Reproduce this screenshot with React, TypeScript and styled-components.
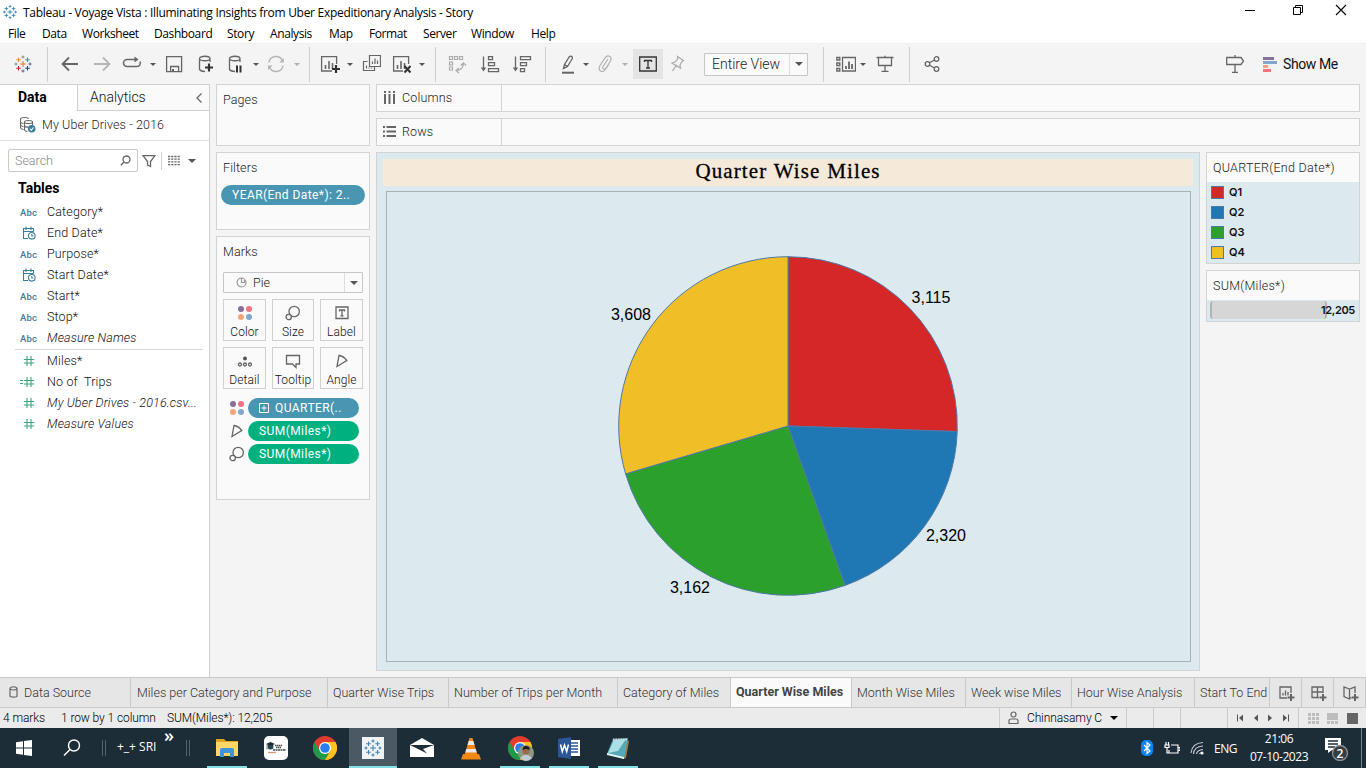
import React from "react";
import styled, { createGlobalStyle, css } from "styled-components";

const GlobalStyle = createGlobalStyle`
  *, *::before, *::after { box-sizing: border-box; }
  body { margin: 0; background: #f4f4f4; }
  svg { display: block; flex: none; }
`;

const tableauFont = `Roboto, "Liberation Sans", sans-serif`;
const systemFont = `"Open Sans", "Noto Sans", sans-serif`;

/* ---------- window chrome ---------- */

const Window = styled.div`
  width: 1366px;
  height: 768px;
  overflow: hidden;
  display: flex;
  flex-direction: column;
  background: #f4f4f4;
  font-family: ${tableauFont};
  font-weight: 300;
  font-size: 13px;
  color: #222;
  white-space: nowrap;
`;

const TitleBar = styled.header`
  height: 24px;
  display: flex;
  align-items: center;
  background: #fff;
  padding-left: 2px;
  font: 12px ${systemFont};
  color: #000;
`;

const TitleText = styled.span`
  margin-left: 5px;
  flex: 1;
  letter-spacing: -0.29px;
`;

const WindowButtons = styled.div`
  display: flex;
  width: 126px;
  justify-content: space-between;
  padding: 0 19px 4px 0;
`;

const MenuBar = styled.nav`
  height: 19px;
  display: flex;
  background: #fff;
  font: 12px/20px ${systemFont};
  color: #000;
`;

const MenuItem = styled.span<{ $w: number }>`
  width: ${(p) => p.$w}px;
  padding-left: 8px;
  letter-spacing: -0.4px;
`;

const Toolbar = styled.div`
  height: 41px;
  display: flex;
  align-items: center;
  border-top: 1px solid #efefef;
`;

const Tool = styled.span<{ $gap: number; $w?: number; $active?: boolean }>`
  width: ${(p) => p.$w ?? 20}px;
  height: ${(p) => (p.$active ? 30 : 20)}px;
  margin-left: ${(p) => p.$gap}px;
  display: flex;
  align-items: center;
  justify-content: center;
  flex: none;
  background: ${(p) => (p.$active ? "#e4e4e4" : "none")};
`;

const ToolDivider = styled.span<{ $gap: number }>`
  width: 1px;
  height: 35px;
  margin-left: ${(p) => p.$gap}px;
  background: #cfcfcf;
  flex: none;
`;

const CaretMark = styled.span<{ $size?: number; $color?: string }>`
  width: 0;
  height: 0;
  border: ${(p) => p.$size ?? 3}px solid transparent;
  border-top-color: ${(p) => p.$color ?? "#555"};
  border-bottom: 0;
  border-top-width: ${(p) => p.$size ?? 3}px;
`;

const SelectBox = styled.div<{ $w: number; $h: number; $gap?: number; $arrow: number }>`
  width: ${(p) => p.$w}px;
  height: ${(p) => p.$h}px;
  margin-left: ${(p) => p.$gap ?? 0}px;
  display: flex;
  flex: none;
  border: 1px solid #c6c6c6;
  border-radius: 1px;
  background: #fafafa;
  color: #222;
  > :last-child {
    width: ${(p) => p.$arrow}px;
    border-left: 1px solid #dedede;
    display: flex;
    align-items: center;
    justify-content: center;
  }
`;

const SelectText = styled.span<{ $pad: number; $size: number }>`
  flex: 1;
  display: flex;
  align-items: center;
  gap: 6px;
  padding: 0 0 1px ${(p) => p.$pad}px;
  font-size: ${(p) => p.$size}px;
`;

const ShowMe = styled.div`
  display: flex;
  align-items: center;
  gap: 6px;
  margin-left: 18px;
  color: #111;
  font-size: 14px;
  font-weight: 400;
  letter-spacing: -0.4px;
  padding-bottom: 1px;
`;

/* ---------- data pane ---------- */

const Workspace = styled.main`
  height: 593px;
  display: flex;
`;

const DataPane = styled.aside`
  width: 210px;
  background: #fff;
  border-top: 1px solid #d0d0d0;
  border-right: 1px solid #cfcfcf;
  flex: none;
`;

const PaneTabs = styled.div`
  height: 26px;
  display: flex;
  font-size: 14px;
  line-height: 25px;
`;

const PaneTab = styled.div<{ $active?: boolean }>`
  display: flex;
  ${(p) =>
    p.$active
      ? css`
          width: 78px;
          padding-left: 18px;
          font-weight: 700;
          color: #000;
          border-right: 1px solid #d0d0d0;
        `
      : css`
          flex: 1;
          padding: 0 6px 0 12px;
          justify-content: space-between;
          align-items: center;
          background: #fafafa;
          border-bottom: 1px solid #d0d0d0;
          color: #111;
        `}
`;

const SourceRow = styled.div`
  height: 30px;
  display: flex;
  align-items: center;
  gap: 6px;
  padding: 0 0 2px 19px;
  border-bottom: 1px solid #e0e0e0;
  font-size: 12.5px;
  letter-spacing: 0.1px;
  color: #222;
`;

const SearchRow = styled.div`
  display: flex;
  align-items: center;
  padding: 8px 0 0 8px;
`;

const SearchBox = styled.div`
  width: 130px;
  height: 23px;
  border: 1px solid #c8c8c8;
  border-radius: 2px;
  display: flex;
  align-items: center;
  justify-content: space-between;
  padding: 0 6px;
  color: #888;
  margin-right: 4px;
  font-size: 12.5px;
`;

const SmallDivider = styled.span`
  width: 1px;
  height: 18px;
  margin: 0 6px 0 5px;
  background: #d0d0d0;
`;

const TablesTitle = styled.h2`
  margin: 6px 0 2px 18px;
  font-size: 14px;
  line-height: 21px;
  color: #000;
`;

const FieldList = styled.div<{ $split?: boolean }>`
  margin: 0 6px 0 15px;
  ${(p) => p.$split && "border-top: 1px solid #d8d8d8; margin-top: 1px;"}
`;

const Field = styled.div<{ $italic?: boolean }>`
  height: 21px;
  display: flex;
  align-items: center;
  color: #111;
  font-size: 12.5px;
  letter-spacing: 0.15px;
  font-style: ${(p) => (p.$italic ? "italic" : "normal")};
  white-space: pre;
`;

const FieldIcon = styled.span`
  width: 27px;
  margin-right: 5px;
  display: flex;
  justify-content: center;
  padding-top: 1px;
`;

const AbcMark = styled.span`
  font: 500 9.5px Roboto, sans-serif;
  color: #3c7d99;
`;

/* ---------- cards ---------- */

const CardColumn = styled.section`
  width: 154px;
  margin-left: 6px;
  display: flex;
  flex-direction: column;
  gap: 6px;
  flex: none;
`;

const Card = styled.div<{ $h: number }>`
  height: ${(p) => p.$h}px;
  border: 1px solid #d3d3d3;
  background: #fafafa;
  flex: none;
`;

const CardTitle = styled.div`
  padding: 7px 0 0 6px;
  line-height: 16px;
  font-size: 12.5px;
  letter-spacing: 0.1px;
  color: #222;
`;

const Pill = styled.div<{ $green?: boolean; $w: number }>`
  width: ${(p) => p.$w}px;
  height: 20px;
  border-radius: 10px;
  display: flex;
  align-items: center;
  gap: 6px;
  padding-left: 11px;
  background: ${(p) => (p.$green ? "#00b180" : "#4996b2")};
  color: #fff;
  font-weight: 400;
  font-size: 12px;
  letter-spacing: 0.43px;
`;

const FilterPill = styled.div`
  padding: 9px 0 0 4px;
`;

const MarkType = styled.div`
  padding: 12px 0 0 6px;
`;

const MarkGrid = styled.div`
  display: grid;
  grid-template-columns: 43px 42px 43px;
  column-gap: 6px;
  row-gap: 6px;
  padding: 6px 0 0 6px;
`;

const MarkButton = styled.div`
  height: 42px;
  border: 1px solid #d0d0d0;
  display: flex;
  flex-direction: column;
  align-items: center;
  gap: 4px;
  padding-top: 5px;
  font-size: 12px;
  line-height: 15px;
  letter-spacing: 0.1px;
  color: #111;
`;

const Encodings = styled.div`
  display: flex;
  flex-direction: column;
  gap: 3px;
  padding: 9px 0 0 11px;
`;

const Encoding = styled.div`
  display: flex;
  align-items: center;
  gap: 2px;
`;

/* ---------- view area ---------- */

const ViewArea = styled.section`
  width: 984px;
  margin-left: 6px;
  display: flex;
  flex-direction: column;
  gap: 6px;
`;

const Shelf = styled.div`
  height: 28px;
  display: flex;
  border: 1px solid #d3d3d3;
  background: #fafafa;
  font-size: 12.5px;
  letter-spacing: 0.15px;
  color: #222;
`;

const ShelfName = styled.div`
  width: 125px;
  display: flex;
  align-items: center;
  gap: 6px;
  padding: 0 0 2px 6px;
  border-right: 1px solid #d3d3d3;
`;

const ViewRow = styled.div`
  display: flex;
  gap: 6px;
`;

const Sheet = styled.div`
  width: 824px;
  height: 519px;
  border: 1px solid #d3d3d3;
  background: #dce9ee;
  padding: 6px;
`;

const SheetTitle = styled.h1`
  margin: 0;
  height: 27px;
  background: #f5e9d9;
  text-align: center;
  font: 400 21px/24px "Liberation Serif", serif;
  letter-spacing: 1.1px;
  word-spacing: 0.5px;
  -webkit-text-stroke: 0.3px #000;
  color: #000;
`;

const Plot = styled.div`
  margin: 5px 2px 0 3px;
  height: 471px;
  border: 1px solid #a9b1b5;
`;

const LegendColumn = styled.div`
  width: 154px;
  display: flex;
  flex-direction: column;
  gap: 6px;
`;

const LegendCard = styled.div<{ $h: number }>`
  height: ${(p) => p.$h}px;
  border: 1px solid #d3d3d3;
  background: #dce9ee;
`;

const LegendTitle = styled.div`
  height: 29px;
  background: #fafafa;
  padding-left: 6px;
  line-height: 30px;
  font-size: 12.5px;
  letter-spacing: 0.27px;
  color: #222;
`;

const LegendItem = styled.div`
  height: 20px;
  display: flex;
  align-items: center;
  gap: 5px;
  padding-left: 4px;
  font: 600 11px Inter, sans-serif;
  color: #111;
`;

const Swatch = styled.span<{ $color: string }>`
  width: 13px;
  height: 13px;
  border: 1px solid #4e79a7;
  background: ${(p) => p.$color};
`;

const SizeScale = styled.div`
  height: 20px;
  display: flex;
  align-items: center;
  font: 600 11px Inter, sans-serif;
  letter-spacing: -0.35px;
  color: #111;
`;

const SizeBar = styled.span`
  width: 117px;
  height: 18px;
  margin: 0 -6px 0 3px;
  border: 2px solid #b3b3b3;
  border-width: 0 2px;
  border-radius: 3px;
  background: #d6d6d6;
`;

/* ---------- sheet tabs and status ---------- */

const SheetTabs = styled.div`
  height: 31px;
  display: flex;
  flex: none;
  border-top: 1px solid #c9c9c9;
  border-bottom: 1px solid #c9c9c9;
  background: #e6e6e6;
`;

const SheetTab = styled.div<{ $w: number; $pad?: number; $active?: boolean }>`
  width: ${(p) => p.$w}px;
  flex: none;
  overflow: hidden;
  display: flex;
  align-items: center;
  padding-left: ${(p) => p.$pad ?? 5}px;
  border-right: 1px solid #c9c9c9;
  color: #333;
  font-size: 12.5px;
  ${(p) =>
    p.$active &&
    css`
      background: #fafafa;
      font-weight: 700;
      color: #444;
      padding-bottom: 2px;
    `}
`;

const StatusBar = styled.footer`
  height: 20px;
  display: flex;
  flex: none;
  background: #ebebeb;
  font-size: 12px;
  line-height: 20px;
  letter-spacing: -0.1px;
  color: #000;
`;

const StatusText = styled.span<{ $w: number }>`
  width: ${(p) => p.$w}px;
`;

const StatusCell = styled.div<{ $w: number }>`
  width: ${(p) => p.$w}px;
  border-left: 1px solid #cbcbcb;
  display: flex;
  align-items: center;
  justify-content: space-evenly;
`;

/* ---------- taskbar ---------- */

const Taskbar = styled.div`
  height: 40px;
  display: flex;
  flex: none;
  background: #1c2d38;
  color: #fff;
  font: 12px ${systemFont};
`;

const TaskSlot = styled.div<{ $w?: number; $open?: boolean; $focused?: boolean }>`
  width: ${(p) => p.$w ?? 49}px;
  height: 40px;
  display: flex;
  align-items: center;
  justify-content: center;
  flex: none;
  ${(p) =>
    p.$open &&
    css`
      background: linear-gradient(#85e0e6, #85e0e6) center bottom / 40px 2px no-repeat;
    `}
  ${(p) =>
    p.$focused &&
    css`
      background: linear-gradient(#85e0e6, #85e0e6) bottom / 100% 2px no-repeat, #4a5963;
    `}
`;

const Grip = styled.span`
  width: 4px;
  height: 16px;
  border: 1px solid #55626b;
  border-width: 0 1px;
`;

const DeskText = styled.span`
  width: 48px;
  padding-left: 5px;
  line-height: 38px;
  letter-spacing: 0;
`;

const Chevrons = styled.span`
  width: 24px;
  padding-left: 4px;
  font-size: 18px;
  font-weight: 600;
  line-height: 14px;
`;

const Tray = styled.div`
  margin-left: auto;
  display: flex;
  align-items: center;
`;

const Clock = styled.div`
  width: 74px;
  text-align: center;
  line-height: 18px;
  letter-spacing: -0.45px;
`;

const Language = styled.span`
  width: 28px;
  letter-spacing: -0.5px;
`;

const DesktopEdge = styled.span`
  width: 1px;
  height: 40px;
  margin: 0 4px 0 3px;
  background: #78838a;
`;

/* ---------- drawings ---------- */

type DrawProps = {
  w?: number;
  h?: number;
  stroke?: string;
  sw?: number;
  children: React.ReactNode;
};

const Draw = ({ w = 20, h = 20, stroke = "#666", sw = 1.3, children }: DrawProps) => (
  <svg width={w} height={h} viewBox={`0 0 ${w} ${h}`} fill="none" stroke={stroke} strokeWidth={sw}>
    {children}
  </svg>
);

const plus = (x: number, y: number, r: number) => `M${x - r} ${y}h${2 * r}M${x} ${y - r}v${2 * r}`;

const TableauLogo = ({ size = 20, mono }: { size?: number; mono?: string }) => {
  const marks: [number, number, number, string][] = [
    [10, 10, 3, "#e8762c"],
    [5.5, 5.8, 2.3, "#eb912b"],
    [14.5, 5.8, 2.3, "#59879b"],
    [5.5, 14.2, 2.3, "#c72035"],
    [14.5, 14.2, 2.3, "#1f447e"],
    [10, 3, 1.6, "#7099a6"],
    [10, 17, 1.6, "#5b6591"],
    [3, 10, 1.6, "#7099a6"],
    [17, 10, 1.6, "#5b6591"],
  ];
  return (
    <svg width={size} height={size} viewBox="0 0 20 20" fill="none">
      {marks.map(([x, y, r, c], i) => (
        <path key={i} d={plus(x, y, r)} stroke={mono ?? c} strokeWidth={1.1} />
      ))}
    </svg>
  );
};

const Bars = ({ x, y }: { x: number; y: number }) => (
  <path d={`M${x} ${y}v-4M${x + 3.5} ${y}v-8M${x + 7} ${y}v-6`} strokeWidth="1.6" />
);

const Cylinder = () => <path d="M15 8V4.5M4.5 4.5v11q1.5 2 5.5 2M4.5 4.5c0-3 10.500-3 10.500 0s-10.500 3-10.500 0Z" />;

const ColorDots = ({ size = 16 }: { size?: number }) => (
  <svg width={size} height={size} viewBox="0 0 16 16">
    <circle cx="4" cy="4" r="3" fill="#85719a" />
    <circle cx="12" cy="4" r="3" fill="#f67280" />
    <circle cx="4" cy="12" r="3" fill="#f2a57b" />
    <circle cx="12" cy="12" r="3" fill="#84a6cc" />
  </svg>
);

const SizeIcon = () => (
  <Draw w={16} h={16}>
    <circle cx="9.200" cy="6.500" r="5.200" />
    <circle cx="3.700" cy="12" r="2.700" fill="#fafafa" />
  </Draw>
);

const AngleIcon = () => (
  <Draw w={16} h={16}>
    <path d="M5 2.500L3 13.500L12.800 7.500Q9.500 3 5 2.500Z" />
  </Draw>
);

const DateIcon = () => (
  <Draw w={14} h={14} stroke="#3c7d99" sw={1.1}>
    <path d="M6 12.500H1.500V2.500h10v3M1.500 5.500h10M4 .5v3.500M9 .5v3.500" />
    <circle cx="9.800" cy="9.800" r="3.300" fill="#fff" />
    <path d="M9.800 8v2h1.500" />
  </Draw>
);

const HashIcon = ({ calc }: { calc?: boolean }) => (
  <Draw w={calc ? 18 : 12} h={12} stroke="#3da57e" sw={1.1}>
    <g transform={calc ? "translate(3 0)" : undefined}>
      <path d="M4 1v10M8 1v10M.8 4.500h10.400M.8 8h10.400" />
    </g>
    {calc && <path d="M0 4.500h3M0 7.500h3" />}
  </Draw>
);

const Chrome = () => (
  <svg width="24" height="24" viewBox="0 0 24 24">
    <circle cx="12" cy="12" r="12" fill="#e33b2e" />
    <path d="M6.800 15L1.600 6A12 12 0 0 0 12 24L17.200 15Z" fill="#1e9a4b" />
    <path d="M12 6H22.400A12 12 0 0 1 12 24L17.200 15Z" fill="#fcc31e" />
    <circle cx="12" cy="12" r="6" fill="#fff" />
    <circle cx="12" cy="12" r="4.800" fill="#2b7de9" />
  </svg>
);

/* ---------- pie ---------- */

type Slice = { name: string; value: number; color: string; x: number; y: number };

const slices: Slice[] = [
  { name: "Q1", value: 3115, color: "#d62728", x: 544, y: 111 },
  { name: "Q2", value: 2320, color: "#1f77b4", x: 559, y: 349 },
  { name: "Q3", value: 3162, color: "#2ca02c", x: 303, y: 401 },
  { name: "Q4", value: 3608, color: "#f0be27", x: 244, y: 128 },
];

const Pie = () => {
  const total = slices.reduce((sum, s) => sum + s.value, 0);
  const cx = 401;
  const cy = 234;
  const r = 169.3;
  let start = 0;
  const at = (a: number) => `${cx + r * Math.sin(a)} ${cy - r * Math.cos(a)}`;
  return (
    <svg width="803" height="469" viewBox="0 0 803 469">
      {slices.map((s) => {
        const end = start + (s.value / total) * Math.PI * 2;
        const d = `M${cx} ${cy}L${at(start)}A${r} ${r} 0 0 1 ${at(end)}Z`;
        start = end;
        return <path key={s.name} d={d} fill={s.color} stroke="#4e79a7" strokeWidth="1" />;
      })}
      {slices.map((s) => (
        <text key={s.name} x={s.x} y={s.y} textAnchor="middle" fontFamily="Liberation Sans" fontWeight="400" fontSize="16" fill="#000">
          {s.value.toLocaleString("en-US")}
        </text>
      ))}
    </svg>
  );
};

/* ---------- content ---------- */

const menus: [string, number][] = [
  ["File", 34],
  ["Data", 40],
  ["Worksheet", 72],
  ["Dashboard", 73],
  ["Story", 43],
  ["Analysis", 59],
  ["Map", 40],
  ["Format", 54],
  ["Server", 48],
  ["Window", 60],
  ["Help", 50],
];

const dimensions: [string, "abc" | "date", boolean?][] = [
  ["Category*", "abc"],
  ["End Date*", "date"],
  ["Purpose*", "abc"],
  ["Start Date*", "date"],
  ["Start*", "abc"],
  ["Stop*", "abc"],
  ["Measure Names", "abc", true],
];

const measures: [string, boolean, boolean?][] = [
  ["Miles*", false],
  ["No of  Trips", true],
  ["My Uber Drives - 2016.csv...", false, true],
  ["Measure Values", false, true],
];

const tabs: [string, number, number?][] = [
  ["Miles per Category and Purpose", 197, 6],
  ["Quarter Wise Trips", 121],
  ["Number of Trips per Month", 169],
  ["Category of Miles", 113],
  ["Quarter Wise Miles", 121],
  ["Month Wise Miles", 114],
  ["Week wise Miles", 106],
  ["Hour Wise Analysis", 123],
  ["Start To End", 75],
];

const Caret = ({ gap, light }: { gap: number; light?: boolean }) => (
  <Tool $gap={gap} $w={6}>
    <CaretMark $size={3} $color={light ? "#b0b0b0" : "#555"} />
  </Tool>
);

const ToolbarRow = () => (
  <Toolbar>
    <Tool $gap={13}><TableauLogo /></Tool>
    <ToolDivider $gap={14} />
    <Tool $gap={12}><Draw sw={1.8}><path d="M2.500 10H18M9 3.500L2.500 10L9 16.500" /></Draw></Tool>
    <Tool $gap={12}><Draw sw={1.800} stroke="#b5b5b5"><path d="M2 10h15.500M11 3.500L17.500 10L11 16.500" /></Draw></Tool>
    <Tool $gap={10}>
      <Draw sw={1.5}>
        <path d="M10 12.500H5a3.500 3.500 0 0 1 0-7H14M10 12.500h5a3.500 3.500 0 0 0 3-5" />
        <path d="M12.500 2.500L16.500 5.500L12.500 8.500Z" fill="#666" stroke="none" />
      </Draw>
    </Tool>
    <Caret gap={8} />
    <Tool $gap={8}><Draw><path d="M2.600 2.600h15v15h-15ZM6.600 17.500v-5h8v5" /><path d="M9 15v3" strokeWidth="2" /></Draw></Tool>
    <Tool $gap={11}><Draw><Cylinder /><path d="M14 9.500v8M10 13.500h8" strokeWidth="2.200" stroke="#333" /></Draw></Tool>
    <Tool $gap={10}><Draw><Cylinder /><path d="M12 11.500v7M15.500 11.500v7" strokeWidth="2" stroke="#333" /></Draw></Tool>
    <Caret gap={8} />
    <Tool $gap={7}>
      <Draw stroke="#b5b5b5" sw={1.5}>
        <path d="M3 8.500A7 7 0 0 1 16.500 7M17 11.500A7 7 0 0 1 3.500 13" />
        <path d="M17.800 4v4.500h-4.500ZM2 16v-4.500h4.500Z" fill="#b5b5b5" stroke="none" />
      </Draw>
    </Tool>
    <Caret gap={8} light />
    <ToolDivider $gap={9} />
    <Tool $gap={10}>
      <Draw>
        <path d="M12 17H1.600V2.600h15V10" />
        <Bars x={5.500} y={15} />
        <path d="M16 11v8M12 15h8" stroke="#333" strokeWidth="2.200" />
      </Draw>
    </Tool>
    <Caret gap={7} />
    <Tool $gap={8}>
      <Draw sw={1.200}>
        <path d="M6.500 7.500H2.500v9h11v-4M8.500 1.500h11v11h-11Z" />
        <path d="M5.500 14.500v-3M8 14.500v-1M10.500 14.500v-1M11.500 10V7.500M14 10V4.500M16.500 10V6.500" />
      </Draw>
    </Tool>
    <Tool $gap={11}>
      <Draw>
        <path d="M11 17H1.600V2.600h15V10" />
        <Bars x={5.500} y={15} />
        <path d="M12.500 12L18.500 18.500M18.500 12L12.500 18.500" stroke="#333" strokeWidth="2" />
      </Draw>
    </Tool>
    <Caret gap={7} />
    <ToolDivider $gap={10} />
    <Tool $gap={11}>
      <Draw stroke="#aaa" sw={1.200}>
        <path d="M2.500 2.500h3v3h-3ZM7.500 2.500h3v3h-3ZM12.500 2.500h3v3h-3ZM2.500 8h3v3h-3ZM2.500 13h3v3h-3ZM10 16.500q6-1 6.500-7M13.800 11.500L16.500 8.800L19 11.500M12 14L9 16.500L12 19" />
      </Draw>
    </Tool>
    <Tool $gap={13}>
      <Draw>
        <path d="M3.500 2.500V16M8.500 2.600h4v3h-4ZM8.500 8.600h6v3h-6ZM8.500 14.600h10v3h-10Z" />
        <path d="M.8 13.500h5.400L3.500 17.500Z" fill="#666" stroke="none" />
      </Draw>
    </Tool>
    <Tool $gap={12}>
      <Draw>
        <path d="M3.500 2.500V16M8.500 2.600h10v3h-10ZM8.500 8.600h6v3h-6ZM8.500 14.600h4v3h-4Z" />
        <path d="M.8 13.500h5.400L3.500 17.500Z" fill="#666" stroke="none" />
      </Draw>
    </Tool>
    <ToolDivider $gap={13} />
    <Tool $gap={12}>
      <Draw>
        <path d="M5.500 14.500L6.500 10.500L11.200 2.800q1.500-1.500 3 .2q.4 1 0 1.800L9.500 12.500ZM6.500 10.500L9.500 12.500" />
        <path d="M4 18.700h12" strokeWidth="2" />
      </Draw>
    </Tool>
    <Caret gap={5} />
    <Tool $gap={6}>
      <Draw stroke="#b0b0b0" sw={1.200}>
        <path d="M13 5L8 12.500q-1 2 .5 2.500t2.500-1L15.500 7q1.500-3.500-1-4.800T10 4L5 11.500q-2 4 .5 5.500T10 16L14 10" />
      </Draw>
    </Tool>
    <Caret gap={7} light />
    <Tool $gap={5} $w={30} $active>
      <Draw stroke="#333" sw={1.300}>
        <path d="M1.700 3h16.600v14H1.700ZM6.500 8V6.500h7V8M10 6.500V14M8 14h4" />
      </Draw>
    </Tool>
    <Tool $gap={4}>
      <Draw stroke="#aaa" sw={1.200}>
        <path d="M10.500 2.500L16.500 6.500L15 7.500L13 11L13.500 14L5 9L8.500 7.500L10.800 4.500ZM9 11.500L5.500 17" />
      </Draw>
    </Tool>
    <SelectBox $w={104} $h={23} $gap={17} $arrow={18}>
      <SelectText $pad={7} $size={14}>Entire View</SelectText>
      <span><CaretMark $size={4} /></span>
    </SelectBox>
    <ToolDivider $gap={15} />
    <Tool $gap={12}>
      <Draw>
        <path d="M.8 3.500h3v2.500h-3ZM.8 9h3v2.500h-3ZM.8 14.500h3V17h-3ZM6.500 3.500h13V17h-13Z" />
        <path d="M10 15v-3M13 15V7.500M16 15v-5" strokeWidth="1.800" />
      </Draw>
    </Tool>
    <Caret gap={4} />
    <Tool $gap={9}><Draw><path d="M1.500 3.500h17M3.500 3.500v8h13v-8M10 11.500V17M6.500 17.300h7M10 1.800v2" /></Draw></Tool>
    <ToolDivider $gap={14} />
    <Tool $gap={12}>
      <Draw>
        <circle cx="5.500" cy="10" r="2.300" />
        <circle cx="14.500" cy="5" r="2.300" />
        <circle cx="14.500" cy="15" r="2.300" />
        <path d="M7.500 8.800L12.500 6M7.500 11.200L12.500 14" />
      </Draw>
    </Tool>
    <Tool $gap={283}><Draw><path d="M1.700 3.500H16l2.500 3.500L16 10.500H1.700ZM10 1v2.500M10 10.500v8M7 18.300h6" /></Draw></Tool>
    <ShowMe>
      <Draw w={14} h={16} stroke="none">
        <rect y="1" width="11" height="3" fill="#85719a" />
        <rect y="5" width="14" height="3" fill="#84a6cc" />
        <rect y="9" width="5" height="3" fill="#f2a57b" />
        <rect y="13" width="8" height="3" fill="#f67280" />
      </Draw>
      Show Me
    </ShowMe>
  </Toolbar>
);

const DataPaneView = () => (
  <DataPane>
    <PaneTabs>
      <PaneTab $active>Data</PaneTab>
      <PaneTab>
        Analytics
        <Draw w={8} h={12}><path d="M6.500 1.500L2 6L6.500 10.500" /></Draw>
      </PaneTab>
    </PaneTabs>
    <SourceRow>
      <Draw w={17} h={17} sw={1.100}>
        <path d="M1.500 3c0-2 8-2 8 0M1.500 3v9q1 1.500 3 1.500M1.500 6q1 1.500 3 1.500M1.500 9q1 1.500 3 1.500M5.500 6c0-2 8-2 8 0s-8 2-8 0v8q1 1.500 3 1.500M13.500 6v3M5.500 10q1.500 1.500 4 1" />
        <circle cx="12.700" cy="12.700" r="3.800" fill="#3c7d99" stroke="none" />
        <path d="M11 12.800l1.300 1.300L14.600 11.500" stroke="#fff" />
      </Draw>
      My Uber Drives - 2016
    </SourceRow>
    <SearchRow>
      <SearchBox>
        Search
        <Draw w={11} h={11}><circle cx="6.500" cy="4.500" r="3.500" /><path d="M4 7L.8 10.200" /></Draw>
      </SearchBox>
      <Draw w={14} h={14}><path d="M1 1.600h12L8.500 7.500v5l-3-1.500V7.500Z" /></Draw>
      <SmallDivider />
      <Draw w={12} h={11} sw={1.300}><path d="M0 1.500h12M0 4.200h12M0 6.900h12M0 9.600h12" strokeDasharray="2.200 1" /></Draw>
      <Tool $gap={5} $w={14}><CaretMark $size={4} /></Tool>
    </SearchRow>
    <TablesTitle>Tables</TablesTitle>
    <FieldList>
      {dimensions.map(([name, kind, italic]) => (
        <Field key={name} $italic={italic}>
          <FieldIcon>{kind === "abc" ? <AbcMark>Abc</AbcMark> : <DateIcon />}</FieldIcon>
          {name}
        </Field>
      ))}
    </FieldList>
    <FieldList $split>
      {measures.map(([name, calc, italic]) => (
        <Field key={name} $italic={italic}>
          <FieldIcon><HashIcon calc={calc} /></FieldIcon>
          {name}
        </Field>
      ))}
    </FieldList>
  </DataPane>
);

const CardsView = () => (
  <CardColumn>
    <Card $h={62}><CardTitle>Pages</CardTitle></Card>
    <Card $h={78}>
      <CardTitle>Filters</CardTitle>
      <FilterPill><Pill $w={144}>YEAR(End Date*): 2..</Pill></FilterPill>
    </Card>
    <Card $h={264}>
      <CardTitle>Marks</CardTitle>
      <MarkType>
        <SelectBox $w={140} $h={21} $arrow={18}>
          <SelectText $pad={12} $size={12.5}>
            <Draw w={11} h={11} stroke="#999" sw={1.200}><circle cx="5.500" cy="5.500" r="4.500" /><path d="M5.500 1v4.500H8.500V3" /></Draw>
            Pie
          </SelectText>
          <span><CaretMark $size={4} /></span>
        </SelectBox>
      </MarkType>
      <MarkGrid>
        <MarkButton><ColorDots />Color</MarkButton>
        <MarkButton><SizeIcon />Size</MarkButton>
        <MarkButton>
          <Draw w={16} h={16}><path d="M2 2h12v11.500H2ZM5.500 6.500V5h5v1.500M8 5v6M6.500 10.800h3" /></Draw>
          Label
        </MarkButton>
        <MarkButton>
          <Draw w={16} h={16}>
            <circle cx="8" cy="5.500" r="2" fill="#555" stroke="none" />
            <circle cx="3" cy="11.500" r="1.500" /><circle cx="8" cy="11.500" r="1.500" /><circle cx="13" cy="11.500" r="1.500" />
          </Draw>
          Detail
        </MarkButton>
        <MarkButton><Draw w={16} h={16}><path d="M1.500 2.500h13v8.500H11v3.500L7.500 11h-6Z" /></Draw>Tooltip</MarkButton>
        <MarkButton><AngleIcon />Angle</MarkButton>
      </MarkGrid>
      <Encodings>
        <Encoding>
          <Tool $gap={0} $w={18}><ColorDots /></Tool>
          <Pill $w={111}>
            <Draw w={10} h={10} stroke="#fff" sw={1}><path d="M.5.5h9v9h-9ZM2.500 5h5M5 2.500v5" /></Draw>
            QUARTER(..
          </Pill>
        </Encoding>
        <Encoding><Tool $gap={0} $w={18}><AngleIcon /></Tool><Pill $w={111} $green>SUM(Miles*)</Pill></Encoding>
        <Encoding><Tool $gap={0} $w={18}><SizeIcon /></Tool><Pill $w={111} $green>SUM(Miles*)</Pill></Encoding>
      </Encodings>
    </Card>
  </CardColumn>
);

const MainView = () => (
  <ViewArea>
    <Shelf>
      <ShelfName>
        <Draw w={13} h={13} stroke="#666" sw={2}><path d="M2 0v2M6.500 0v2M11 0v2M2 3v10M6.500 3v10M11 3v10" /></Draw>
        Columns
      </ShelfName>
    </Shelf>
    <Shelf>
      <ShelfName>
        <Draw w={13} h={13} stroke="#666" sw={2}><path d="M0 2h2M0 6.500h2M0 11h2M3.500 2H13M3.500 6.500H13M3.500 11H13" /></Draw>
        Rows
      </ShelfName>
    </Shelf>
    <ViewRow>
      <Sheet>
        <SheetTitle>Quarter Wise Miles</SheetTitle>
        <Plot><Pie /></Plot>
      </Sheet>
      <LegendColumn>
        <LegendCard $h={112}>
          <LegendTitle>QUARTER(End Date*)</LegendTitle>
          {slices.map((s) => (
            <LegendItem key={s.name}><Swatch $color={s.color} />{s.name}</LegendItem>
          ))}
        </LegendCard>
        <LegendCard $h={52}>
          <LegendTitle>SUM(Miles*)</LegendTitle>
          <SizeScale><SizeBar />12,205</SizeScale>
        </LegendCard>
      </LegendColumn>
    </ViewRow>
  </ViewArea>
);

const BottomBars = () => (
  <>
    <SheetTabs>
      <SheetTab $w={131} $pad={9}>
        <Draw w={15} h={14} sw={1.200}><path d="M1 3c0-3 7-3 7 0v7c0 1.500-7 1.500-7 0ZM1 3q3.500 2 7 0" /></Draw>
        Data Source
      </SheetTab>
      {tabs.map(([name, w, pad]) => (
        <SheetTab key={name} $w={w} $pad={pad} $active={name === "Quarter Wise Miles"}>{name}</SheetTab>
      ))}
      <SheetTab $w={32} $pad={8}>
        <Draw w={18} h={18}><path d="M9 14H2V3h11v6M5 11.500V9M7.500 11.500v-5M10 11.500V8" /><path d="M13 10v7M9.500 13.500h7" strokeWidth="2" /></Draw>
      </SheetTab>
      <SheetTab $w={32} $pad={8}>
        <Draw w={18} h={18}><path d="M9 13.500H2V3h11v6M7.500 3v10.500M2 8h11" /><path d="M13 10v7M9.500 13.500h7" strokeWidth="2" /></Draw>
      </SheetTab>
      <SheetTab $w={32} $pad={8}>
        <Draw w={18} h={18}><path d="M9 13.500L7.500 15L2 12.500V3l5.500 2L13 3v6M7.500 5v10" /><path d="M13 10v7M9.500 13.500h7" strokeWidth="2" /></Draw>
      </SheetTab>
    </SheetTabs>
    <StatusBar>
      <StatusText $w={3} />
      <StatusText $w={58}>4 marks</StatusText>
      <StatusText $w={106}>1 row by 1 column</StatusText>
      <StatusText $w={832}>SUM(Miles*): 12,205</StatusText>
      <StatusCell $w={127}>
        <Draw w={11} h={14} sw={1.200}><circle cx="5.500" cy="3.500" r="2.500" /><path d="M1 12.500V10q0-2 2-2h5q2 0 2 2v2.500Z" /></Draw>
        Chinnasamy C
        <CaretMark $size={4} $color="#000" />
      </StatusCell>
      <StatusCell $w={27} />
      <StatusCell $w={27} />
      <StatusCell $w={47} />
      <StatusCell $w={71}>
        <Draw w={8} h={8} stroke="none"><path d="M1 .5h1v7H1ZM7 .5v7L3 4Z" fill="#555" /></Draw>
        <Draw w={6} h={8} stroke="none"><path d="M5 .5v7L1 4Z" fill="#555" /></Draw>
        <Draw w={6} h={8} stroke="none"><path d="M1 .5v7L5 4Z" fill="#555" /></Draw>
        <Draw w={8} h={8} stroke="none"><path d="M6 .5h1v7H6ZM1 .5v7L5 4Z" fill="#555" /></Draw>
      </StatusCell>
      <StatusCell $w={68}>
        <Draw w={11} h={11} stroke="#bdbdbd" sw={3}><path d="M0 1.500h11M0 5.500h11M0 9.500h11" strokeDasharray="3 1" /></Draw>
        <Draw w={11} h={11} stroke="#bdbdbd" sw={3}><path d="M0 3.500h11" strokeWidth="7" /><path d="M0 9.500h11" strokeDasharray="3 1" /></Draw>
        <Draw w={11} h={11} stroke="none"><rect width="11" height="11" fill="#666" /></Draw>
      </StatusCell>
    </StatusBar>
  </>
);

const TaskbarView = () => (
  <Taskbar>
    <TaskSlot $w={48}>
      <Draw w={16} h={16} stroke="none"><path d="M0 2.300L7 1.200V7.500H0ZM8 1L16 0V7.500H8ZM0 8.500H7V14.800L0 13.700ZM8 8.500H16V16L8 15Z" fill="#fff" /></Draw>
    </TaskSlot>
    <TaskSlot $w={48}>
      <Draw w={18} h={18} stroke="#fff" sw={1.400}><circle cx="11" cy="6.500" r="5.500" /><path d="M7 10.500L1 16.500" /></Draw>
    </TaskSlot>
    <TaskSlot $w={16}><Grip /></TaskSlot>
    <DeskText>+_+ SRI</DeskText>
    <Chevrons>»</Chevrons>
    <TaskSlot $w={8}><Grip /></TaskSlot>
    <TaskSlot $w={10} />
    <TaskSlot $open>
      <Draw w={22} h={20} stroke="none">
        <path d="M0 1h8l2 2h12v15H0Z" fill="#e0a420" />
        <path d="M0 4h22v14H0Z" fill="#fcd667" />
        <path d="M4 19v-7q0-2 2-2h10q2 0 2 2v7h-4v-4H8v4Z" fill="#3d94db" />
      </Draw>
    </TaskSlot>
    <TaskSlot>
      <Draw w={24} h={24} stroke="none">
        <rect width="24" height="24" rx="5" fill="#fff" />
        <path d="M2 8L6.500 6L11 8L6.500 10Z" fill="#182b33" />
        <path d="M4 9v3.500q2.500 1.500 5 0V9M3 8.500v5" fill="#27444e" stroke="#27444e" strokeWidth=".6" />
        <path d="M11 9.500h7M12 11.500h5" stroke="#444" strokeDasharray="1.500 .5" />
        <path d="M9 14h13" stroke="#36484d" strokeWidth="1.300" strokeDasharray="2 .5" />
        <path d="M4 16.500h8" stroke="#d8936d" />
      </Draw>
    </TaskSlot>
    <TaskSlot><Chrome /></TaskSlot>
    <TaskSlot $w={48} $focused>
      <Draw w={24} h={24} stroke="none">
        <rect x="1" y="1" width="22" height="22" fill="#f0f2f3" />
        <g transform="translate(2 2)"><TableauLogo mono="#4184b4" /></g>
      </Draw>
    </TaskSlot>
    <TaskSlot>
      <Draw w={24} h={20} stroke="none"><path d="M0 7L12 0L24 7V19H0Z" fill="#fff" /><path d="M0 7L24 7L13 11L17 15.500Z" fill="#1c2d38" /></Draw>
    </TaskSlot>
    <TaskSlot>
      <Draw w={20} h={23} stroke="none">
        <path d="M2 17h16l2 5.500H0Z" fill="#f58713" />
        <path d="M8.500 1h3L16.500 18q-6.500 3-13 0Z" fill="#f58713" />
        <path d="M7.700 4h4.600l1.200 4H6.500ZM5.300 12h9.400l1 3.500H4.300Z" fill="#e9e9e9" />
      </Draw>
    </TaskSlot>
    <TaskSlot $open>
      <Draw w={28} h={26} stroke="none">
        <g transform="translate(2 1)"><Chrome /></g>
        <circle cx="20" cy="18" r="8" fill="#8c9880" />
        <path d="M14 23q6-7 12 0q-6 6-12 0" fill="#c3cbd2" />
        <circle cx="20" cy="16" r="3.500" fill="#9a6a4e" />
        <path d="M16.500 15q0-4.500 4-4t3 4q-3-2-7 0" fill="#1e1c1c" />
      </Draw>
    </TaskSlot>
    <TaskSlot $open>
      <Draw w={22} h={22} stroke="none">
        <rect x="11" y="3" width="11" height="16" fill="#fff" />
        <path d="M13 6h7M13 9h7M13 12h7M13 15h7" stroke="#2b579a" />
        <path d="M0 2L13 0V22L0 20Z" fill="#2b579a" />
        <path d="M2.500 7.500L4.300 14.500L6.500 8L8.700 14.500L10.500 7.500" stroke="#fff" strokeWidth="1.500" fill="none" />
      </Draw>
    </TaskSlot>
    <TaskSlot $open>
      <Draw w={24} h={22} stroke="none">
        <path d="M19 2L23 4L20 21L17 22Z" fill="#a67a43" />
        <path d="M7 2L22 1L18 22L1 17Z" fill="#54a9b8" />
        <path d="M8 3L20 2L12 14L2 16Z" fill="#a9dfe5" />
        <path d="M1 16L18 20V22L1 18Z" fill="#e4f2f3" />
        <path d="M7 2.500h15" stroke="#d5dadb" strokeWidth="2" strokeDasharray="1.500 1" />
      </Draw>
    </TaskSlot>
    <Tray>
      <TaskSlot $w={24}>
        <Draw w={12} h={16} stroke="#fff" sw={1.200}><rect width="12" height="16" rx="5" fill="#0a84f5" stroke="none" /><path d="M3 5L9 11L6 13.500V2.500L9 5L3 11" /></Draw>
      </TaskSlot>
      <TaskSlot $w={25}>
        <Draw w={16} h={13} stroke="#fff" sw={1.200}><path d="M7 3h7v8H5V8M14.500 5.500h1.500v3h-1.500M1 3h4v2.500H1ZM2 0v3M4.500 0v3M3 6v5h2" /></Draw>
      </TaskSlot>
      <TaskSlot $w={26}>
        <Draw w={14} h={14} stroke="#c2c8cb" sw={1.200}><path d="M1 12Q2 2 13 1.500M3.500 13Q4 5.500 13 5M6.500 13Q7 9 13 8.500M9.500 13q.5-1.500 3-1.500" /><circle cx="12" cy="12" r="1.500" fill="#fff" stroke="none" /></Draw>
      </TaskSlot>
      <TaskSlot $w={4} />
      <Language>ENG</Language>
      <Clock>21:06<br />07-10-2023</Clock>
      <TaskSlot $w={42}>
        <Draw w={26} h={26} stroke="none">
          <path d="M1 3h16v12H8l-4 3v-3H1Z" fill="#fff" />
          <path d="M4 6h10M4 9h10M4 12h7" stroke="#1c2d38" />
          <circle cx="16" cy="18" r="7.500" fill="#353d43" stroke="#8b9296" />
          <text x="16" y="22.500" textAnchor="middle" fontFamily="Open Sans" fontWeight="600" fontSize="12" fill="#fff">2</text>
        </Draw>
      </TaskSlot>
      <DesktopEdge />
    </Tray>
  </Taskbar>
);

export default function App() {
  return (
    <Window>
      <GlobalStyle />
      <TitleBar>
        <TableauLogo size={16} mono="#2f7f9f" />
        <TitleText>Tableau - Voyage Vista : Illuminating Insights from Uber Expeditionary Analysis - Story</TitleText>
        <WindowButtons>
          <Draw w={20} h={12} stroke="#000" sw={1}><path d="M5 6.500h10" /></Draw>
          <Draw w={12} h={12} stroke="#000" sw={1}><path d="M1.500 3.500h7v7h-7ZM3.500 3.500v-2h7v7h-2" /></Draw>
          <Draw w={12} h={12} stroke="#000" sw={1.100}><path d="M1 1l10 10M11 1L1 11" /></Draw>
        </WindowButtons>
      </TitleBar>
      <MenuBar>{menus.map(([name, w]) => <MenuItem key={name} $w={w}>{name}</MenuItem>)}</MenuBar>
      <ToolbarRow />
      <Workspace>
        <DataPaneView />
        <CardsView />
        <MainView />
      </Workspace>
      <BottomBars />
      <TaskbarView />
    </Window>
  );
}
